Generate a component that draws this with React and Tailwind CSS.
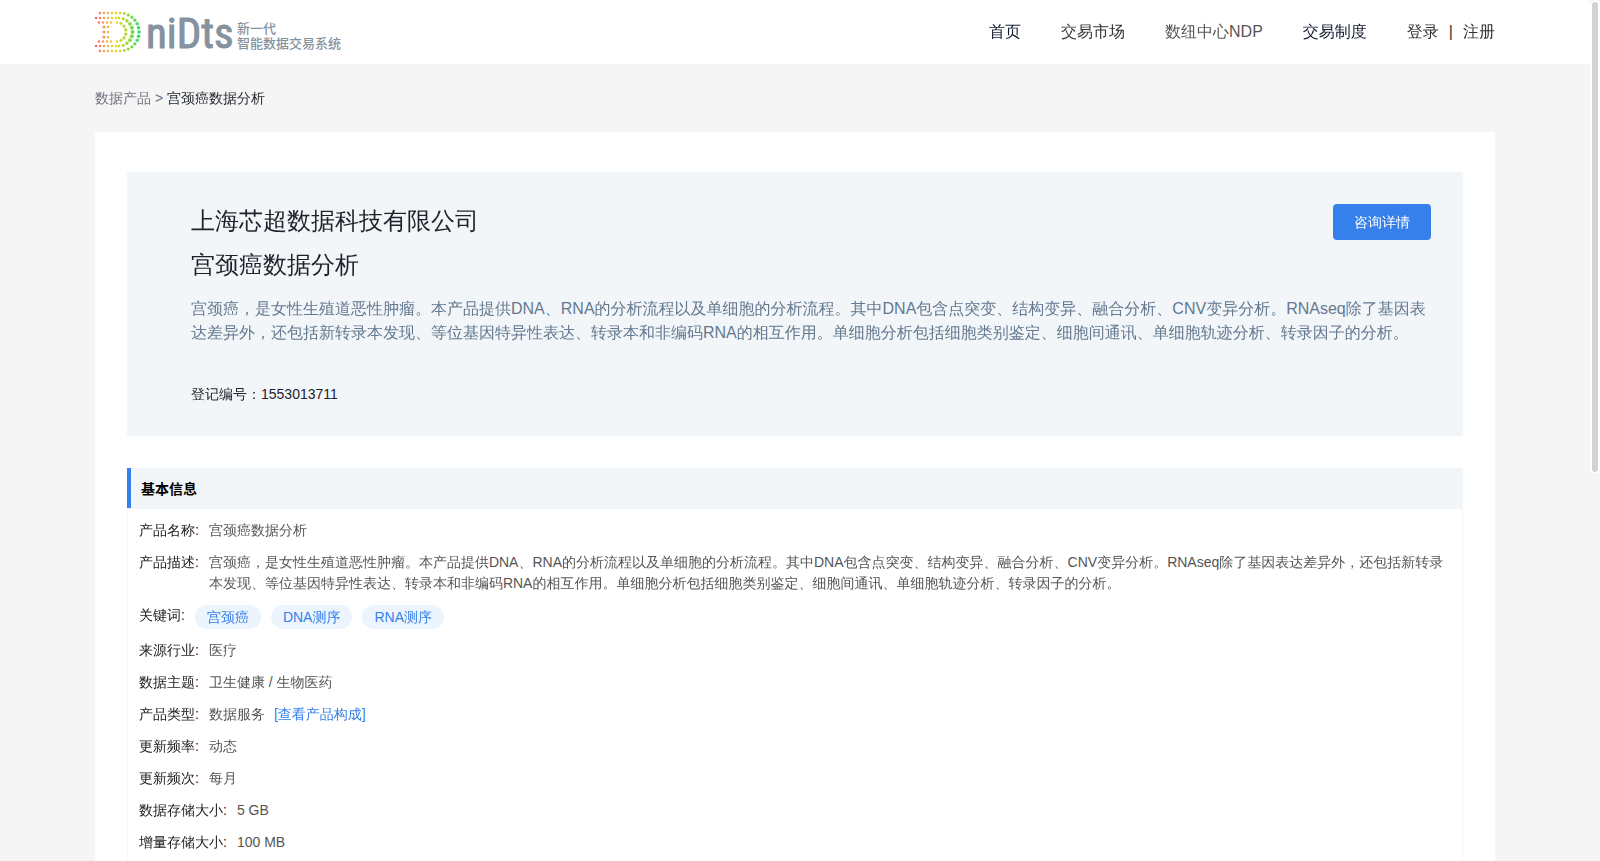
const description =
  '宫颈癌，是女性生殖道恶性肿瘤。本产品提供DNA、RNA的分析流程以及单细胞的分析流程。其中DNA包含点突变、结构变异、融合分析、CNV变异分析。RNAseq除了基因表达差异外，还包括新转录本发现、等位基因特异性表达、转录本和非编码RNA的相互作用。单细胞分析包括细胞类别鉴定、细胞间通讯、单细胞轨迹分析、转录因子的分析。';

const navLinks = [
  { label: '首页', className: 'text-[#0f172a]' },
  { label: '交易市场', className: 'text-[#333333]' },
  { label: '数纽中心NDP', className: 'text-[#555555]' },
  { label: '交易制度', className: 'text-[#0f172a]' },
];

const ring = (startX, centerX, radiusX, radiusY, arcSteps, size) => {
  const dots = [];
  for (let x = startX; x < centerX - 2; x += 4) {
    dots.push([x, 24 - radiusY, 1.2]);
    dots.push([x, 24 + radiusY, 1.2]);
  }
  for (let i = 0; i <= arcSteps; i += 1) {
    const angle = -Math.PI / 2 + (Math.PI * i) / arcSteps;
    dots.push([
      centerX + radiusX * Math.cos(angle),
      24 + radiusY * Math.sin(angle),
      1.3 + (size - 1.3) * Math.cos(angle),
    ]);
  }
  return dots;
};

const logoDots = [
  ...ring(8, 28, 19, 19, 14, 1.8),
  ...ring(4, 27, 13.5, 14, 10, 2),
  ...ring(7, 25, 9, 9.5, 7, 1.7),
  ...[19, 24, 29].flatMap((y) => [
    [12, y, 1.5],
    [16, y, 1.2],
  ]),
];

function Logo() {
  return (
    <svg className="h-12 w-[250px]" viewBox="3 0 250 48" role="img" aria-label="niDts 新一代智能数据交易系统">
      <defs>
        <linearGradient id="dots" gradientUnits="userSpaceOnUse" x1="3" y1="0" x2="48" y2="0">
          <stop offset="0" stopColor="#ee4f78" />
          <stop offset="0.2" stopColor="#f79a55" />
          <stop offset="0.42" stopColor="#ecd51c" />
          <stop offset="0.7" stopColor="#a9d92c" />
          <stop offset="1" stopColor="#2bdb70" />
        </linearGradient>
      </defs>
      <g fill="url(#dots)">
        {logoDots.map(([x, y, r], i) => (
          <circle key={i} cx={x} cy={y} r={r} />
        ))}
      </g>
      <g fill="#8592a0">
        <text
          x="54"
          y="40"
          className="font-['Roboto_Condensed','Liberation_Sans',sans-serif] text-[43px] font-normal"
          stroke="#8592a0"
          strokeWidth="1"
          strokeLinejoin="round"
        >
          niDts
        </text>
        <g className="font-['Noto_Sans_CJK_SC',sans-serif] text-[13px] font-medium">
          <text x="145" y="25">新一代</text>
          <text x="145" y="40">智能数据交易系统</text>
        </g>
      </g>
    </svg>
  );
}

function Header() {
  return (
    <header className="bg-white">
      <div className="mx-auto flex h-16 max-w-[1400px] items-center justify-between">
        <a href="#home">
          <Logo />
        </a>
        <nav className="flex items-center gap-10 text-base">
          {navLinks.map((link) => (
            <a key={link.label} href="#nav" className={link.className}>
              {link.label}
            </a>
          ))}
          <div className="flex gap-2.5 text-[#333333]">
            <a href="#login">登录</a>
            <span>|</span>
            <a href="#register">注册</a>
          </div>
        </nav>
      </div>
    </header>
  );
}

function Hero() {
  return (
    <section className="bg-[#f2f6f9] py-8 pr-8 pl-16 text-[#1d2129]">
      <div className="flex items-start justify-between">
        <div className="flex flex-col gap-2.5 text-2xl leading-[34px]">
          <h1>上海芯超数据科技有限公司</h1>
          <h2>宫颈癌数据分析</h2>
        </div>
        <button type="button" className="h-9 rounded bg-[#3580eb] px-[21px] text-sm text-white">
          咨询详情
        </button>
      </div>
      <p className="mt-[15px] text-base leading-6 text-[#64788f]">{description}</p>
      <p className="mt-[39px] text-sm leading-5">登记编号：1553013711</p>
    </section>
  );
}

function Row({ label, children }) {
  return (
    <div className="flex gap-2.5">
      <dt className="shrink-0 text-[#222222]">{label}:</dt>
      <dd className="text-[#555555]">{children}</dd>
    </div>
  );
}

function BasicInfo() {
  return (
    <section className="mt-8 border border-[#f2f6f9]">
      <div className="-mx-px -mt-px border-b border-[#f2f6f9] bg-[#f2f6f9]">
        <h3 className="flex h-10 items-center border-l-4 border-[#3580eb] pl-2.5 font-['Noto_Sans_CJK_SC',sans-serif] text-sm font-bold text-black">
          基本信息
        </h3>
      </div>
      <dl className="flex flex-col gap-[11px] p-[11px] text-sm leading-[21px]">
        <Row label="产品名称">宫颈癌数据分析</Row>
        <Row label="产品描述">{description}</Row>
        <Row label="关键词">
          <ul className="flex gap-2.5">
            {['宫颈癌', 'DNA测序', 'RNA测序'].map((tag) => (
              <li key={tag} className="rounded-full bg-[#ecf5fe] px-3 leading-6 text-[#3580eb]">
                {tag}
              </li>
            ))}
          </ul>
        </Row>
        <Row label="来源行业">医疗</Row>
        <Row label="数据主题">卫生健康 / 生物医药</Row>
        <Row label="产品类型">
          数据服务
          <a href="#composition" className="ml-[9px] text-[#3580eb]">
            [查看产品构成]
          </a>
        </Row>
        <Row label="更新频率">动态</Row>
        <Row label="更新频次">每月</Row>
        <Row label="数据存储大小">5 GB</Row>
        <Row label="增量存储大小">100 MB</Row>
      </dl>
    </section>
  );
}

export default function App() {
  return (
    <div
      lang="zh-CN"
      className="flex h-screen overflow-hidden bg-[#f5f5f5] font-['Liberation_Sans','WenQuanYi_Zen_Hei','Noto_Sans_CJK_SC',sans-serif]"
    >
      <div className="min-w-0 flex-1">
        <Header />
        <main className="mx-auto max-w-[1400px]">
          <nav aria-label="面包屑" className="py-6 text-sm leading-5 text-[#71717f]">
            <a href="#products">数据产品</a>
            <span> &gt; </span>
            <span className="text-[#1d2129]">宫颈癌数据分析</span>
          </nav>
          <div className="min-h-screen bg-white px-8 py-10">
            <Hero />
            <BasicInfo />
          </div>
        </main>
      </div>
      <div aria-hidden="true" className="w-2.5 shrink-0">
        <div className="h-[55%] rounded-full border-2 border-white bg-[#d2d2d2]" />
      </div>
    </div>
  );
}
